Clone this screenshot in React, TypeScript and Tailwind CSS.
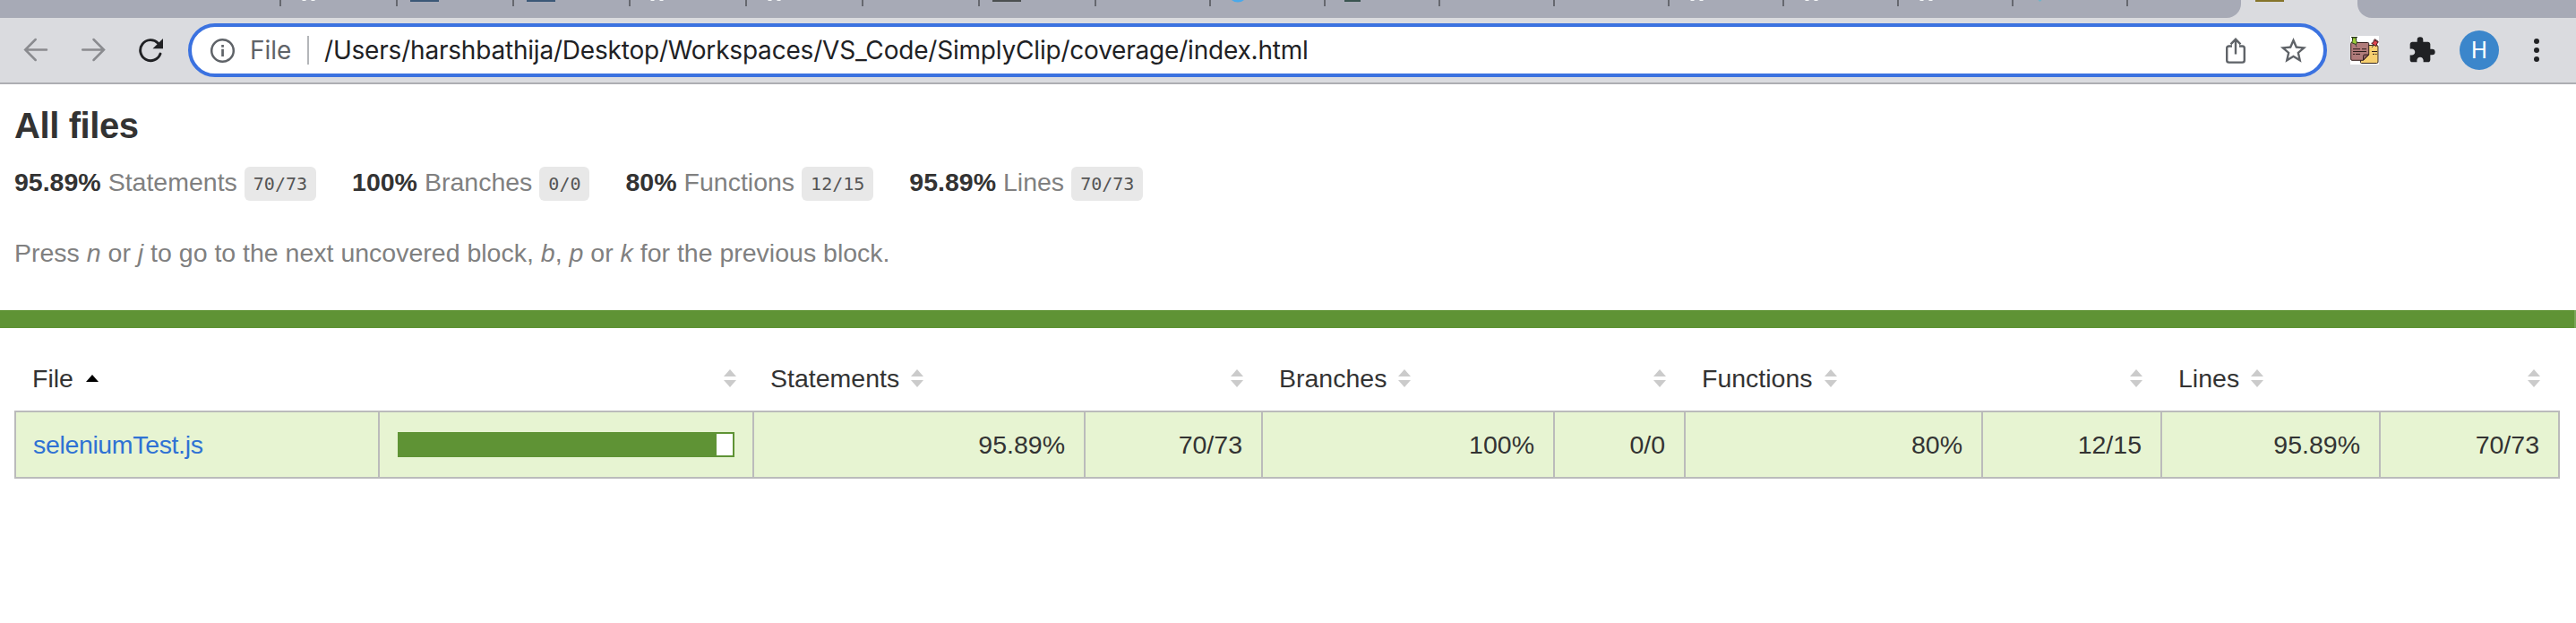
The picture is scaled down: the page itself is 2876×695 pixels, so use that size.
import React from "react";

type Favicon = { left: number; width: number; color: string; kind?: "dots" | "round" | "tip" };
type Tab = { width: number; icon?: Favicon };

const tabs: Tab[] = [
  { width: 314 },
  { width: 130, icon: { left: 23, width: 15, color: "#f4f5f7", kind: "dots" } },
  { width: 130, icon: { left: 14, width: 32, color: "#3b5877" } },
  { width: 130, icon: { left: 14, width: 32, color: "#3b5877" } },
  { width: 130, icon: { left: 22, width: 15, color: "#f4f5f7", kind: "dots" } },
  { width: 130, icon: { left: 23, width: 15, color: "#f4f5f7", kind: "dots" } },
  { width: 130 },
  { width: 130, icon: { left: 14, width: 32, color: "#4b4f50" } },
  { width: 128 },
  { width: 128, icon: { left: 23, width: 14, color: "#4aa9ea", kind: "round" } },
  { width: 128, icon: { left: 21, width: 18, color: "#3a5450" } },
  { width: 128 },
  { width: 128 },
  { width: 128, icon: { left: 23, width: 15, color: "#f4f5f7", kind: "dots" } },
  { width: 128, icon: { left: 23, width: 15, color: "#f4f5f7", kind: "dots" } },
  { width: 128, icon: { left: 23, width: 15, color: "#f4f5f7", kind: "dots" } },
  { width: 128, icon: { left: 27, width: 5, color: "#6fb4c8", kind: "tip" } },
];

function TabIcon({ icon }: { icon: Favicon }) {
  return (
    <svg className="shrink-0" style={{ marginLeft: icon.left }} width={icon.width} height="3" viewBox={`0 0 ${icon.width} 3`}>
      {icon.kind === "dots" ? (
        <path d={`M0.5 0h4v1h-4zM${icon.width - 4.5} 0h4v1h-4z`} fill={icon.color} />
      ) : icon.kind === "round" ? (
        <path d="M0 0h14q-3 2.6-7 2.6T0 0z" fill={icon.color} />
      ) : icon.kind === "tip" ? (
        <path d="M0.5 0h4L2.500 2z" fill={icon.color} />
      ) : (
        <rect width={icon.width} height="2" fill={icon.color} />
      )}
    </svg>
  );
}

function TabStrip() {
  return (
    <div className="flex h-5 bg-[#dadbdf]">
      <div className="flex h-5 w-[2502px] shrink-0 items-start rounded-br-[16px] bg-[#a7aab6]">
        {tabs.map((t, i) => (
          <div key={i} className="flex h-[7px] shrink-0 items-start border-r-2 border-[#66686f]" style={{ width: t.width }}>
            {t.icon && <TabIcon icon={t.icon} />}
          </div>
        ))}
      </div>
      <div className="h-5 w-[130px] shrink-0 pl-4">
        <div className="h-0.5 w-8 bg-[#85742a]" />
      </div>
      <div className="h-5 flex-1 rounded-bl-[16px] bg-[#a7aab6]" />
    </div>
  );
}

function NotesIcon() {
  return (
    <svg width="32" height="32" viewBox="0 0 32 32">
      <rect width="32" height="32" fill="#fff" />
      <path d="M12 10.5h17.5q1.500 0 1.500 1.500v17q0 1.500-1.500 1.500H12.500q-1 0-1-1z" fill="#f7d070" stroke="#33251c" />
      <path d="M1 7.500h18.500q1.200 0 1.200 1.200V21l-6 6.300H2q-1.300 0-1.300-1.300V8.500z" fill="#b07b7a" stroke="#35201f" />
      <path d="M20.500 21l-6 6v-4.500q0-1.500 1.500-1.500z" fill="#8f5f60" stroke="#35201f" />
      <path d="M3 14.700h8M13 14.700h5M3 17.500h15M3 20.400h2M6 20.400h5M24 17.500h6M25 20.400h2M28 20.400h1.500" stroke="#2c1d1c" fill="none" />
      <path d="M1 1.500h7M2.500 2v3.500L1.500 7.500l5 2.200 1-2.700-1-1.500V2z" fill="#9bcf3c" stroke="#2c3a1c" />
      <path d="M27 3.500l4.500 3M26.500 4.500l-.8 3-2 .8 5.300 3.400.6-2.700 1.500-2z" fill="#e0454f" stroke="#4a1a1f" />
      <path d="M6 9.500l1 3M26.500 10l-2.500 3" stroke="#444" />
    </svg>
  );
}

function Toolbar() {
  return (
    <div className="flex h-[74px] items-center border-b-2 border-[#adaeb2] bg-[#dadbdf]">
      <svg className="ml-[26px] shrink-0" width="28" height="28" viewBox="0 0 28 28" fill="none" stroke="#8a8b8f" strokeWidth="2.500" strokeLinecap="round">
        <path d="M26 13.500H2.500M13.700 2L2.200 13.500l11.500 11.500" />
      </svg>
      <svg className="ml-[36px] shrink-0" width="28" height="28" viewBox="0 0 28 28" fill="none" stroke="#8a8b8f" strokeWidth="2.500" strokeLinecap="round">
        <path d="M2.200 13.500h23.500M14.500 2L26 13.500 14.500 25" />
      </svg>
      <svg className="ml-[36px] shrink-0" width="30" height="28" viewBox="0 0 30 28">
        <path d="M25 18A11.500 11.500 0 1 1 22.500 6.200" fill="none" stroke="#202124" strokeWidth="2.900" strokeLinecap="round" />
        <path d="M28 1v11.200H16.500z" fill="#202124" />
      </svg>
      <div className="ml-[26px] flex h-[60px] w-[2388px] shrink-0 items-center rounded-full border-4 border-[#3b72e0] bg-white">
        <svg className="ml-5 shrink-0" width="30" height="30" viewBox="0 0 30 30">
          <circle cx="14.500" cy="15.500" r="12.300" fill="none" stroke="#5f6368" strokeWidth="2.500" />
          <path d="M13.200 9h2.700v2.800h-2.700zM13.200 13.800h2.700v8.200h-2.700z" fill="#5f6368" />
        </svg>
        <span className="ml-[15px] w-[64px] shrink-0 font-['Inter',sans-serif] text-[28px] leading-8 text-[#5f6368]">File</span>
        <div className="h-8 w-0.5 shrink-0 bg-[#b4b6b9]" />
        <span className="ml-[17px] flex-1 whitespace-nowrap font-['Inter',sans-serif] text-[28px] leading-8 tracking-[-0.2px] text-[#202124]">
          /Users/harshbathija/Desktop/Workspaces/VS_Code/SimplyClip/coverage/index.html
        </span>
        <svg className="mr-[35px] shrink-0" width="24" height="30" viewBox="0 0 24 30" fill="none" stroke="#5f6368" strokeWidth="2.400">
          <path d="M8 10.500H4.500Q2.200 10.500 2.200 12.800v13.500q0 2.300 2.300 2.300h15q2.300 0 2.300-2.300V12.800q0-2.300-2.300-2.300H16M12 19.500V3M6.500 8.300L12 2.800l5.500 5.500" />
        </svg>
        <svg className="mr-4 shrink-0" width="35" height="35" viewBox="0 0 24 24">
          <path d="M22 9.240l-7.190-.62L12 2 9.190 8.630 2 9.240l5.460 4.730L5.820 21 12 17.270 18.180 21l-1.630-7.030L22 9.240zM12 15.400l-3.760 2.270 1-4.280-3.320-2.880 4.380-.38L12 6.100l1.710 4.040 4.380.38-3.320 2.880 1 4.280L12 15.400z" fill="#5f6368" />
        </svg>
      </div>
      <div className="ml-[26px] shrink-0"><NotesIcon /></div>
      <svg className="ml-[32px] shrink-0" width="32" height="32" viewBox="0 0 24 24">
        <path d="M20.500 11H19V7c0-1.100-.9-2-2-2h-4V3.500a2.500 2.500 0 0 0-5 0V5H4c-1.100 0-1.990.9-1.990 2v3.800H3.500c1.490 0 2.700 1.210 2.700 2.700s-1.210 2.700-2.700 2.700H2V20c0 1.100.9 2 2 2h3.800v-1.500c0-1.490 1.210-2.700 2.700-2.700 1.490 0 2.700 1.210 2.700 2.700V22H17c1.100 0 2-.9 2-2v-4h1.500a2.500 2.500 0 0 0 0-5z" fill="#202124" />
      </svg>
      <div className="ml-[26px] flex size-11 shrink-0 items-center justify-center rounded-full bg-[#3b86cb] font-['Roboto',sans-serif] text-[25px] leading-none text-white">
        H
      </div>
      <svg className="ml-[39px] shrink-0" width="6" height="28" viewBox="0 0 6 28" fill="#202124">
        <circle cx="3" cy="4" r="3" />
        <circle cx="3" cy="14" r="3" />
        <circle cx="3" cy="24" r="3" />
      </svg>
    </div>
  );
}

const metrics = [
  { pct: "95.89%", label: "Statements", fraction: "70/73", pctWidth: 370, fracWidth: 198 },
  { pct: "100%", label: "Branches", fraction: "0/0", pctWidth: 326, fracWidth: 146 },
  { pct: "80%", label: "Functions", fraction: "12/15", pctWidth: 332, fracWidth: 200 },
  { pct: "95.89%", label: "Lines", fraction: "70/73", pctWidth: 244, fracWidth: 200 },
];

function Summary() {
  return (
    <div className="flex h-[38px] gap-10">
      {metrics.map((m) => (
        <div key={m.label} className="flex items-center gap-2 whitespace-nowrap">
          <strong className="pb-[5px] font-bold">{m.pct}</strong>
          <span className="pb-[5px] text-[#808080]">{m.label}</span>
          <span className="flex h-[38px] items-center rounded-[6px] bg-[#e8e8e8] px-[10px] font-['DejaVu_Sans_Mono',monospace] text-[20px] text-[#555]">
            {m.fraction}
          </span>
        </div>
      ))}
    </div>
  );
}

function Sorter({ active = false }: { active?: boolean }) {
  return (
    <svg className="shrink-0" width="14" height="20" viewBox="0 0 14 20">
      {active ? (
        <path d="M7 6l7 8H0z" fill="#000" />
      ) : (
        <path d="M7 0l7 8H0zM0 12h14l-7 8z" fill="#cbcbcb" />
      )}
    </svg>
  );
}

function CoverageTable() {
  return (
    <div className="flex flex-col">
      <div className="flex h-[92px] pb-5 pt-10">
        <div className="flex w-[406px] items-center gap-[14px] pl-5">File<Sorter active /></div>
        <div className="flex w-[418px] items-center justify-end pr-[18px]"><Sorter /></div>
        {metrics.map((m) => (
          <React.Fragment key={m.label}>
            <div className="flex items-center gap-[13px] pl-5" style={{ width: m.pctWidth }}>{m.label}<Sorter /></div>
            <div className="flex items-center justify-end pr-5" style={{ width: m.fracWidth }}><Sorter /></div>
          </React.Fragment>
        ))}
      </div>
      <div className="flex h-[76px] w-[2842px] items-stretch border-y-2 border-r-2 border-[#bbb] bg-[#e7f4d2]">
        <div className="flex w-[406px] items-center border-l-2 border-[#bbb] pl-[19px] tracking-[-0.35px] text-[#2f72d4]">seleniumTest.js</div>
        <div className="flex w-[418px] items-center border-l-2 border-[#bbb] pl-5">
          <div className="h-7 w-[376px] border-2 border-[#5f9335] bg-white">
            <div className="h-6 bg-[#5f9335]" style={{ width: 354 }} />
          </div>
        </div>
        {metrics.map((m) => (
          <React.Fragment key={m.label}>
            <div className="flex items-center justify-end border-l-2 border-[#bbb] pr-[21px]" style={{ width: m.pctWidth }}>{m.pct}</div>
            <div className="flex items-center justify-end border-l-2 border-[#bbb] pr-[21px]" style={{ width: m.fracWidth }}>{m.fraction}</div>
          </React.Fragment>
        ))}
      </div>
    </div>
  );
}

export default function App() {
  return (
    <div className="h-[695px] w-[2876px] overflow-hidden bg-white font-['Liberation_Sans',Arial,sans-serif] text-[28.5px] leading-8 text-[#333]">
      <TabStrip />
      <Toolbar />
      <main className="flex flex-col">
        <div className="flex h-[252px] flex-col px-4 pt-[23px]">
          <h1 className="h-[69px] text-[40px] font-bold leading-[46px] tracking-[-0.4px]">All files</h1>
          <Summary />
          <p className="mt-[42px] text-[#808080]">
            Press <em>n</em> or <em>j</em> to go to the next uncovered block, <em>b</em>, <em>p</em> or <em>k</em> for the previous block.
          </p>
        </div>
        <div className="h-5 border-r-2 border-[#7ba659] bg-[#5f9335]" />
        <div className="px-4">
          <CoverageTable />
        </div>
      </main>
    </div>
  );
}
